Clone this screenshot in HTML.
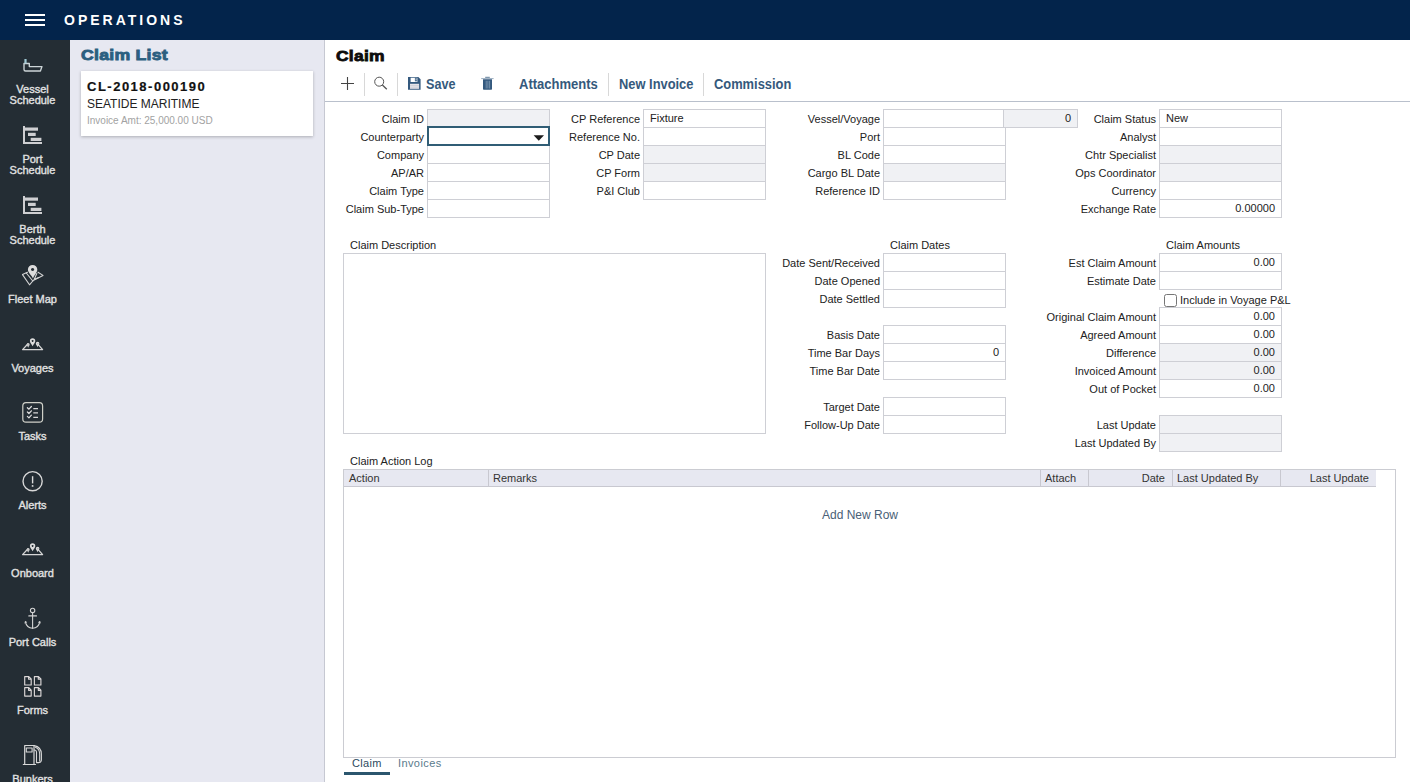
<!DOCTYPE html>
<html><head><meta charset="utf-8"><title>Claim</title>
<style>
*{box-sizing:border-box;margin:0;padding:0}
html,body{width:1410px;height:782px;overflow:hidden;background:#fff;font-family:"Liberation Sans",Arial,sans-serif;font-size:11px;color:#222}
#hdr{position:absolute;left:0;top:0;width:1410px;height:40px;background:#03244b}
#hdr .bar{position:absolute;left:25px;width:20px;height:2px;background:#fff}
#hdr .t{position:absolute;left:64px;top:12px;font-size:14px;font-weight:bold;letter-spacing:3px;color:#fff;line-height:16px}
#side{position:absolute;left:0;top:40px;width:70px;height:742px;background:#242d34;overflow:hidden}
.sl{position:absolute;left:0;width:65px;text-align:center;color:#e2e2e2;-webkit-text-stroke:.35px #e2e2e2;font-size:11px;line-height:11px;white-space:nowrap}
#side svg{position:absolute;left:0;top:0;overflow:visible}
#list{position:absolute;left:70px;top:40px;width:254px;height:742px;background:#e7e8f1}
#list h2{position:absolute;left:10.5px;top:5.4px;font-size:15px;font-weight:bold;color:#2b5f80;letter-spacing:.2px;line-height:20px;-webkit-text-stroke:.85px #2b5f80;transform:scaleX(1.18);transform-origin:0 50%;white-space:nowrap}
#card{position:absolute;left:11px;top:31px;width:232px;height:65px;background:#fff;box-shadow:0 1px 3px rgba(0,0,0,.25)}
#card .a{position:absolute;left:6px;top:8px;font-size:13px;font-weight:bold;letter-spacing:1.5px;color:#111;line-height:15px;-webkit-text-stroke:.2px #111}
#card .b{position:absolute;left:6px;top:26px;font-size:12px;color:#222;line-height:14px}
#card .c{position:absolute;left:6px;top:44px;font-size:10px;color:#a2a2a2;line-height:12px}
#vl{position:absolute;left:324px;top:40px;width:1px;height:742px;background:#c6c8d2}
#main{position:absolute;left:0;top:0;width:1410px;height:782px}
#main h1{position:absolute;left:335.5px;top:45.5px;font-size:15px;font-weight:bold;color:#0c0c0c;letter-spacing:.2px;line-height:20px;-webkit-text-stroke:.8px #0c0c0c;transform:scaleX(1.165);transform-origin:0 50%;white-space:nowrap}
#tbl{position:absolute;left:325px;top:101px;width:1085px;height:1px;background:#b9c0cc}
.tbt{position:absolute;top:75.8px;font-size:14px;font-weight:bold;color:#35597c;line-height:16px;white-space:nowrap;transform:scaleX(.915);transform-origin:0 50%}
.sep{position:absolute;top:73px;width:1px;height:23px;background:#d8d8d8}
.l{position:absolute;height:18px;line-height:18px;text-align:right;font-size:11px;color:#222;white-space:nowrap;width:140px}
.i{position:absolute;height:19px;width:123px;border:1px solid #cecfd5;background:#fff;font-size:11px;line-height:16px;padding:0 6px;color:#222;white-space:nowrap}
.i.g{background:#f0f1f4}
.i.r{text-align:right}
.h{position:absolute;font-size:11px;line-height:13px;color:#222;white-space:nowrap}
.th{position:absolute;top:470px;height:17px;background:#e7e8f1;border-bottom:1px solid #c8c8d0;border-right:1px solid #c8c8d0;font-size:11px;line-height:16px;color:#333;padding:0 5px;white-space:nowrap}
</style></head><body>
<div id="hdr"><div class="bar" style="top:14px"></div><div class="bar" style="top:19px"></div><div class="bar" style="top:24px"></div><div class="t">OPERATIONS</div></div>

<div id="side">
<svg width="70" height="742" viewBox="0 40 70 742" fill="none" stroke="#c9ced2" stroke-width="1.1" stroke-linejoin="round" stroke-linecap="round">
<!-- vessel -->
<path d="M24 63.5 H29.3 V66.6 H42 L40.4 71 H25.5 Q24 71 24 69.5 Z" stroke="#cdd5d8" stroke-width="1.35"/>
<path d="M25.5 59 V63.5" stroke-width="2.2" stroke-linecap="butt" stroke="#9fc6d2"/>
<!-- port schedule gantt -->
<g stroke="none" fill="#cfcfd2">
<rect x="23" y="126" width="2" height="18"/><rect x="23" y="142" width="19" height="2"/>
<rect x="25" y="127.5" width="13" height="3.2"/><rect x="28" y="132.8" width="7.7" height="3.2"/><rect x="30.7" y="137.8" width="10.7" height="3.2"/>
<rect x="23" y="196" width="2" height="18"/><rect x="23" y="212" width="19" height="2"/>
<rect x="25" y="197.5" width="13" height="3.2"/><rect x="28" y="202.8" width="7.7" height="3.2"/><rect x="30.7" y="207.8" width="10.7" height="3.2"/>
</g>
<!-- fleet map -->
<path d="M27.5 272.3 L22.5 274.6 L29.5 284.8 L33.2 280.5 L43 275.4 L38 272.2" stroke="#d4d4d4"/>
<path d="M26.3 273 L32.8 281 M36.8 273.5 L34.2 279.5 L38.6 277.6" stroke="#d4d4d4"/>
<path d="M32.6 264.9 a4.7 4.7 0 0 1 4.7 4.7 c0 3.1 -3.2 5.7 -4.3 8.9 c-1.5 -3.2 -5.1 -5.8 -5.1 -8.9 a4.7 4.7 0 0 1 4.7 -4.7 Z M32.6 267.9 a1.6 1.6 0 1 0 0.01 0Z" fill="#dcdcdc" stroke="none" fill-rule="evenodd"/>
<!-- voyages -->
<g id="voy" stroke="#d6d6d6">
<path d="M28 343.8 L22.6 349.6 H42.6 L37.6 343.8" stroke-width="1.3"/>
<path d="M32.6 338.3 a2.7 2.7 0 0 1 2.7 2.7 c0 1.8 -1.7 3.2 -2.7 5.2 c-1 -2 -2.700 -3.400 -2.700 -5.200 a2.700 2.700 0 0 1 2.700 -2.700 Z M32.600 340.100 a0.900 0.900 0 1 0 0.010 0Z" fill="#dcdcdc" stroke="none" fill-rule="evenodd"/>
<path d="M37.6 341.8 a1.800 1.800 0 0 1 1.800 1.800 c0 1.200 -1.200 2.200 -1.800 3.600 c-0.600 -1.400 -1.800 -2.400 -1.800 -3.600 a1.800 1.800 0 0 1 1.800 -1.800 Z M37.6 343 a0.600 0.600 0 1 0 0.010 0Z" fill="#dcdcdc" stroke="none" fill-rule="evenodd"/>
<path d="M28.2 343 a1.500 1.500 0 0 1 1.500 1.500 c0 1.100 -1 2 -1.500 3.200 c-0.500 -1.200 -1.500 -2.100 -1.500 -3.200 a1.500 1.500 0 0 1 1.500 -1.500 Z" fill="#c8c8c8" stroke="none"/>
</g>
<use href="#voy" y="205"/>
<!-- tasks -->
<rect x="22.8" y="402.7" width="19.8" height="19.4" rx="3.2" stroke="#cfd0c8" stroke-width="1.2"/>
<path d="M27.4 407.7 L28.9 409.2 L31.4 406.5 M27.4 412 L28.9 413.5 L31.4 410.8 M27.4 416.4 L28.9 417.9 L31.4 415.2" stroke="#dcdcdc" stroke-width="1.25"/>
<path d="M33.3 408.6 H38 M33.3 412.9 H38 M33.3 417.4 H38" stroke="#d6d6d6" stroke-width="1.2" stroke-linecap="butt"/>
<!-- alerts -->
<circle cx="32.6" cy="481.2" r="9.6" stroke="#d8d8d8" stroke-width="1.4"/>
<path d="M32.6 476.2 V483.4" stroke="#dcdcdc" stroke-width="1.4" stroke-linecap="butt"/><circle cx="32.6" cy="485.9" r=".95" fill="#dcdcdc" stroke="none"/>
<!-- anchor -->
<g stroke="#d4d4d4" stroke-width="1.1">
<circle cx="32.6" cy="610.4" r="2.2"/>
<path d="M32.6 612.8 V628.3 M28.8 615.9 H36.5"/>
<path d="M25.400 621.800 Q26.600 627.800 32.600 628.300 Q38.600 627.800 39.800 621.800"/>
<path d="M25 623 L25.4 621.4 L26.700 622.300 M38.500 622.300 L39.800 621.400 L40.200 623" stroke-width=".9"/>
</g>
<!-- forms -->
<g stroke="#dcd8d8" stroke-width="1.15">
<path id="doc" d="M24.7 676.6 H28.800 L31.200 679 V685 H24.700 Z M28.600 676.800 V679.200 H31"/>
<use href="#doc" x="9.7"/><use href="#doc" y="11.1"/><use href="#doc" x="9.7" y="11.1"/>
</g>
<!-- bunkers -->
<g stroke="#d8d8d8" stroke-width="1.1">
<path d="M24.700 764 V745.500 H34 V764 M23.300 764.500 H35.500" stroke-width="1.2"/>
<rect x="26.300" y="748" width="5.800" height="4"/>
<path d="M34.200 745.600 Q41.300 747 41.400 754 V760 Q41.300 762.600 38.600 762.600 H36.500 V752 Q36.400 750 34.200 750"/><path d="M35.5 747.3 Q39.600 749 39.700 754 V761"/>
</g>
</svg>
<div class="sl" style="top:44px">Vessel<br>Schedule</div>
<div class="sl" style="top:114px">Port<br>Schedule</div>
<div class="sl" style="top:184px">Berth<br>Schedule</div>
<div class="sl" style="top:254px">Fleet Map</div>
<div class="sl" style="top:323px">Voyages</div>
<div class="sl" style="top:391px">Tasks</div>
<div class="sl" style="top:460px">Alerts</div>
<div class="sl" style="top:528px">Onboard</div>
<div class="sl" style="top:597px">Port Calls</div>
<div class="sl" style="top:665px">Forms</div>
<div class="sl" style="top:734px">Bunkers</div>
</div>
<div id="list"><h2>Claim List</h2><div id="card"><div class="a">CL-2018-000190</div><div class="b">SEATIDE MARITIME</div><div class="c">Invoice Amt: 25,000.00 USD</div></div></div>
<div id="vl"></div>
<div id="main"><h1>Claim</h1>
<svg style="position:absolute;left:325px;top:66px" width="200" height="34" viewBox="325 66 200 34" fill="none">
<path d="M341 83.500 H354 M347.500 77 V90" stroke="#444" stroke-width="1.100"/>
<circle cx="379.200" cy="81.700" r="4.500" stroke="#555" stroke-width="1"/><path d="M382.400 85 L386.800 89.300" stroke="#555" stroke-width="1.300"/>
<path d="M408 77 H418.300 L420.600 79.300 V89.700 H408 Z" fill="#34597e"/>
<rect x="410.600" y="77.700" width="6.800" height="4.300" fill="#fff"/><rect x="414.900" y="77.700" width="2.200" height="3.600" fill="#34597e"/><rect x="415.700" y="78.300" width=".8" height="2.200" fill="#fff"/>
<rect x="410" y="83.800" width="9.100" height="5" fill="#e6e3e8"/><path d="M410 85.500 H419.100 M410 87.200 H419.100" stroke="#bfc3cc" stroke-width=".5"/>
<path d="M481.200 78.600 H493.600" stroke="#7f97ae" stroke-width=".8"/><path d="M485.200 77.300 H489.800" stroke="#5f7d99" stroke-width="1"/>
<path d="M483 79.300 H492 V89 Q492 89.700 491.300 89.700 H483.700 Q483 89.700 483 89 Z" fill="#34597e"/>
<path d="M486.200 80.800 V88.500 M487.900 80.800 V88.500 M489.600 80.800 V88.500" stroke="#8fa8c0" stroke-width=".7"/>
</svg>
<div class="sep" style="left:364px"></div><div class="sep" style="left:397px"></div><div class="sep" style="left:608px"></div><div class="sep" style="left:703px"></div>
<div class="tbt" style="left:426px;transform:scaleX(.9)">Save</div><div class="tbt" style="left:519px;transform:scaleX(.93)">Attachments</div><div class="tbt" style="left:619px;transform:scaleX(.92)">New Invoice</div><div class="tbt" style="left:714px;transform:scaleX(.92)">Commission</div>
<div id="tbl"></div>
<div class="l" style="left:284px;top:110px">Claim ID</div>
<div class="i g" style="left:427px;top:109px"></div>
<div class="l" style="left:284px;top:128px">Counterparty</div>
<div class="i" style="left:427px;top:127px"></div>
<div class="l" style="left:284px;top:146px">Company</div>
<div class="i" style="left:427px;top:145px"></div>
<div class="l" style="left:284px;top:164px">AP/AR</div>
<div class="i" style="left:427px;top:163px"></div>
<div class="l" style="left:284px;top:182px">Claim Type</div>
<div class="i" style="left:427px;top:181px"></div>
<div class="l" style="left:284px;top:200px">Claim Sub-Type</div>
<div class="i" style="left:427px;top:199px"></div>
<div class="l" style="left:500px;top:110px">CP Reference</div>
<div class="i" style="left:643px;top:109px">Fixture</div>
<div class="l" style="left:500px;top:128px">Reference No.</div>
<div class="i" style="left:643px;top:127px"></div>
<div class="l" style="left:500px;top:146px">CP Date</div>
<div class="i g" style="left:643px;top:145px"></div>
<div class="l" style="left:500px;top:164px">CP Form</div>
<div class="i g" style="left:643px;top:163px"></div>
<div class="l" style="left:500px;top:182px">P&amp;I Club</div>
<div class="i" style="left:643px;top:181px"></div>
<div class="l" style="left:740px;top:110px">Vessel/Voyage</div>
<div class="i" style="left:883px;top:109px"></div>
<div class="l" style="left:740px;top:128px">Port</div>
<div class="i" style="left:883px;top:127px"></div>
<div class="l" style="left:740px;top:146px">BL Code</div>
<div class="i" style="left:883px;top:145px"></div>
<div class="l" style="left:740px;top:164px">Cargo BL Date</div>
<div class="i g" style="left:883px;top:163px"></div>
<div class="l" style="left:740px;top:182px">Reference ID</div>
<div class="i" style="left:883px;top:181px"></div>
<div class="i g r" style="left:1003px;top:109px;width:75px">0</div>
<div class="l" style="left:1016px;top:110px">Claim Status</div>
<div class="i" style="left:1159px;top:109px">New</div>
<div class="l" style="left:1016px;top:128px">Analyst</div>
<div class="i" style="left:1159px;top:127px"></div>
<div class="l" style="left:1016px;top:146px">Chtr Specialist</div>
<div class="i g" style="left:1159px;top:145px"></div>
<div class="l" style="left:1016px;top:164px">Ops Coordinator</div>
<div class="i g" style="left:1159px;top:163px"></div>
<div class="l" style="left:1016px;top:182px">Currency</div>
<div class="i" style="left:1159px;top:181px"></div>
<div class="l" style="left:1016px;top:200px">Exchange Rate</div>
<div class="i r" style="left:1159px;top:199px">0.00000</div>
<div style="position:absolute;left:427px;top:126px;width:123px;height:20px;border:2px solid #305d75;background:#fff"></div>
<svg style="position:absolute;left:533px;top:135px" width="12" height="7" viewBox="0 0 12 7"><path d="M0.600 0.200 H11 L5.800 5.800 Z" fill="#1c1c1c"/></svg>
<div class="h" style="left:350px;top:239px">Claim Description</div>
<div style="position:absolute;left:343px;top:253px;width:423px;height:181px;border:1px solid #cecfd5;background:#fff"></div>
<div class="h" style="left:890px;top:239px">Claim Dates</div>
<div class="l" style="left:740px;top:254px">Date Sent/Received</div>
<div class="i" style="left:883px;top:253px"></div>
<div class="l" style="left:740px;top:272px">Date Opened</div>
<div class="i" style="left:883px;top:271px"></div>
<div class="l" style="left:740px;top:290px">Date Settled</div>
<div class="i" style="left:883px;top:289px"></div>
<div class="l" style="left:740px;top:326px">Basis Date</div>
<div class="i" style="left:883px;top:325px"></div>
<div class="l" style="left:740px;top:344px">Time Bar Days</div>
<div class="i r" style="left:883px;top:343px">0</div>
<div class="l" style="left:740px;top:362px">Time Bar Date</div>
<div class="i" style="left:883px;top:361px"></div>
<div class="l" style="left:740px;top:398px">Target Date</div>
<div class="i" style="left:883px;top:397px"></div>
<div class="l" style="left:740px;top:416px">Follow-Up Date</div>
<div class="i" style="left:883px;top:415px"></div>
<div class="h" style="left:1166px;top:239px">Claim Amounts</div>
<div class="l" style="left:1016px;top:254px">Est Claim Amount</div>
<div class="i r" style="left:1159px;top:253px">0.00</div>
<div class="l" style="left:1016px;top:272px">Estimate Date</div>
<div class="i" style="left:1159px;top:271px"></div>
<div class="l" style="left:1016px;top:308px">Original Claim Amount</div>
<div class="i r" style="left:1159px;top:307px">0.00</div>
<div class="l" style="left:1016px;top:326px">Agreed Amount</div>
<div class="i r" style="left:1159px;top:325px">0.00</div>
<div class="l" style="left:1016px;top:344px">Difference</div>
<div class="i g r" style="left:1159px;top:343px">0.00</div>
<div class="l" style="left:1016px;top:362px">Invoiced Amount</div>
<div class="i g r" style="left:1159px;top:361px">0.00</div>
<div class="l" style="left:1016px;top:380px">Out of Pocket</div>
<div class="i r" style="left:1159px;top:379px">0.00</div>
<div class="l" style="left:1016px;top:416px">Last Update</div>
<div class="i g" style="left:1159px;top:415px"></div>
<div class="l" style="left:1016px;top:434px">Last Updated By</div>
<div class="i g" style="left:1159px;top:433px"></div>
<div style="position:absolute;left:1164px;top:294px;width:13px;height:13px;border:1px solid #767676;border-radius:2.5px;background:#fff"></div>
<div class="h" style="left:1180px;top:294px">Include in Voyage P&amp;L</div>
<div class="h" style="left:350px;top:455px">Claim Action Log</div>
<div style="position:absolute;left:343px;top:469px;width:1053px;height:289px;border:1px solid #cbccd2;background:#fff"></div>
<div class="th" style="left:344px;width:145px;text-align:left">Action</div>
<div class="th" style="left:489px;width:552px;text-align:left;padding-left:4px">Remarks</div>
<div class="th" style="left:1041px;width:48px;text-align:left;padding-left:4px">Attach</div>
<div class="th" style="left:1089px;width:84px;text-align:right;padding-left:4px;padding-right:7px">Date</div>
<div class="th" style="left:1173px;width:108px;text-align:left;padding-left:4px">Last Updated By</div>
<div class="th" style="left:1281px;width:95px;text-align:right;padding-left:4px;padding-right:7px;border-right:none">Last Update</div>
<div style="position:absolute;left:760px;top:508px;width:200px;text-align:center;font-size:12px;line-height:14px;color:#4a6076">Add New Row</div>
<div style="position:absolute;left:352px;top:757px;font-size:11px;line-height:13px;letter-spacing:.35px;color:#2d4a5e">Claim</div>
<div style="position:absolute;left:398px;top:757px;font-size:11px;line-height:13px;letter-spacing:.4px;color:#5a7a8c">Invoices</div>
<div style="position:absolute;left:344px;top:772px;width:46px;height:3px;background:#2b566e"></div>
</div></body></html>
